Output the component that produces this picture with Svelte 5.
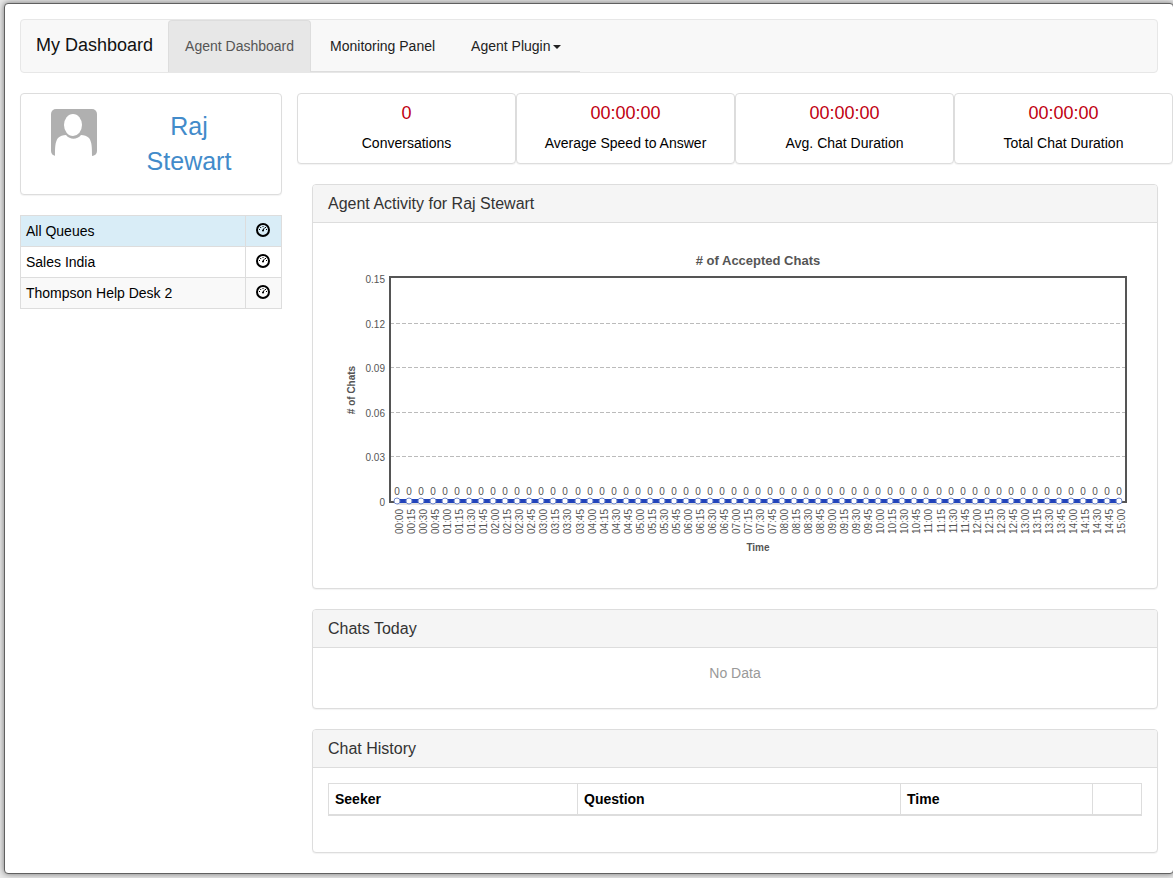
<script>
  const tabs = [
    { label: 'Agent Dashboard', active: true },
    { label: 'Monitoring Panel' },
    { label: 'Agent Plugin', menu: true },
  ];

  const stats = [
    { value: '0', label: 'Conversations' },
    { value: '00:00:00', label: 'Average Speed to Answer' },
    { value: '00:00:00', label: 'Avg. Chat Duration' },
    { value: '00:00:00', label: 'Total Chat Duration' },
  ];

  const queues = ['All Queues', 'Sales India', 'Thompson Help Desk 2'];
  let selected = $state('All Queues');

  // Plot area inside the chart's viewBox
  const plot = { left: 62, right: 798, top: 39, bottom: 264 };
  const firstX = 69;
  const lastX = 791;
  const lineY = 263;

  const gridLines = [
    { label: '0.15', y: 41 },
    { label: '0.12', y: 85.5, line: true },
    { label: '0.09', y: 129.5, line: true },
    { label: '0.06', y: 174.5, line: true },
    { label: '0.03', y: 218.5, line: true },
    { label: '0', y: 264 },
  ];

  // One point every 15 minutes, 00:00 to 15:00
  const points = Array.from({ length: 61 }, (_, i) => {
    const hours = String(Math.floor(i / 4)).padStart(2, '0');
    const minutes = String((i % 4) * 15).padStart(2, '0');
    return {
      time: `${hours}:${minutes}`,
      value: 0,
      x: Math.round(firstX + (i * (lastX - firstX)) / 60),
    };
  });
</script>

{#snippet gauge()}
  <svg class="gauge" viewBox="0 0 14 14" width="14" height="14" aria-hidden="true">
    <circle cx="7" cy="7" r="6" fill="none" stroke="#000" stroke-width="2" />
    <path d="M6.8 8 8.4 4.8" stroke="#000" stroke-width="1" />
    <circle cx="7" cy="7.6" r="1" />
    <path d="M3 6.5h1M10 6.5h1M4.2 4.5h1M6.5 3.5h1M9 4.5h1" stroke="#000" stroke-width="1" />
  </svg>
{/snippet}

<div class="window">
  <nav class="navbar">
    <a class="brand" href="#home">My Dashboard</a>
    <ul class="tabs">
      {#each tabs as tab}
        <li>
          <a href="#tab" class:active={tab.active}>
            {tab.label}{#if tab.menu}<span class="caret"></span>{/if}
          </a>
        </li>
      {/each}
    </ul>
  </nav>

  <div class="row">
    <aside class="sidebar">
      <div class="panel profile">
        <svg class="avatar" viewBox="0 0 46 47" width="46" height="47" aria-hidden="true">
          <path
            fill="#b0b0b0"
            d="M5 0h36a5 5 0 0 1 5 5v37a5 5 0 0 1-5 5H5a5 5 0 0 1-5-5V5a5 5 0 0 1 5-5z"
          />
          <ellipse cx="22" cy="16" rx="9" ry="11" fill="#fff" />
          <path
            fill="#fff"
            d="M4 47C4 39 4 33 7 29c2-2 5-3 8-3 4 5 11 5 15 0 3 0 6 1 8 3 3 4 3 10 3 18z"
          />
        </svg>
        <a class="name" href="#profile">Raj<br />Stewart</a>
      </div>

      <table class="queues">
        <tbody>
          {#each queues as queue}
            <tr class:selected={queue === selected}>
              <td>{queue}</td>
              <td class="icon-cell">
                <button aria-label="Show {queue}" onclick={() => (selected = queue)}>
                  {@render gauge()}
                </button>
              </td>
            </tr>
          {/each}
        </tbody>
      </table>
    </aside>

    <main class="main">
      <div class="stats">
        {#each stats as stat}
          <div class="panel stat">
            <span class="value">{stat.value}</span>
            <span>{stat.label}</span>
          </div>
        {/each}
      </div>

      <section class="panel">
        <h3>Agent Activity for Raj Stewart</h3>
        <div class="body">
          <svg class="chart" viewBox="0 0 814 335" role="img" aria-label="Accepted chats over time">
            <text class="title" x="430" y="27">&#35; of Accepted Chats</text>
            <text class="axis-title" transform="translate(27 152) rotate(-90)">&#35; of Chats</text>
            <text class="axis-title" x="430" y="313">Time</text>

            {#each gridLines as grid}
              <text class="y-label" x="57" y={grid.y + 4}>{grid.label}</text>
              {#if grid.line}
                <line class="grid" x1={plot.left} x2={plot.right} y1={grid.y} y2={grid.y} />
              {/if}
            {/each}

            <rect
              class="frame"
              x={plot.left}
              y={plot.top}
              width={plot.right - plot.left}
              height={plot.bottom - plot.top}
            />
            <line class="shade" x1={firstX} x2={lastX} y1={lineY + 3} y2={lineY + 3} />
            <line class="series" x1={firstX - 2} x2={lastX + 2} y1={lineY} y2={lineY} />

            {#each points as point}
              <circle cx={point.x} cy={lineY} r="3" />
              <text class="point-label" x={point.x} y="257">{point.value}</text>
              <text class="x-label" transform="translate({point.x + 6} 271) rotate(-90)">
                {point.time}
              </text>
            {/each}
          </svg>
        </div>
      </section>

      <section class="panel">
        <h3>Chats Today</h3>
        <div class="body">
          <p class="empty">No Data</p>
        </div>
      </section>

      <section class="panel">
        <h3>Chat History</h3>
        <div class="body">
          <table class="history">
            <thead>
              <tr>
                <th class="seeker">Seeker</th>
                <th class="question">Question</th>
                <th class="time">Time</th>
                <th></th>
              </tr>
            </thead>
          </table>
        </div>
      </section>
    </main>
  </div>
</div>

<style>
  :global(body) {
    background: #e8e8e8;
    overflow-x: hidden;
  }

  .window,
  .window * {
    box-sizing: border-box;
  }

  .window {
    margin: 3px -1px 5px 4px;
    padding: 15px 15px 0;
    background: #fff;
    border: 1px solid #606060;
    border-radius: 4px;
    box-shadow: 0 0 6px rgba(0, 0, 0, 0.5);
    font-family: 'Liberation Sans', Arial, sans-serif;
    font-size: 14px;
    line-height: 20px;
    color: #000;
  }

  a {
    text-decoration: none;
  }

  .navbar {
    display: flex;
    height: 54px;
    margin-bottom: 20px;
    background: #f8f8f8;
    border: 1px solid #e7e7e7;
    border-radius: 4px;
  }

  .brand {
    padding: 15px;
    font-size: 18px;
    color: #111;
  }

  .tabs {
    display: flex;
    margin: 0;
    padding: 0;
    list-style: none;
    border-bottom: 1px solid #ddd;
  }

  .tabs li {
    margin-right: 2px;
  }

  .tabs a {
    display: block;
    height: 52px;
    padding: 15px 16px;
    border: 1px solid transparent;
    border-bottom: 0;
    border-radius: 4px 4px 0 0;
    color: #222;
  }

  .tabs a.active {
    background: #e7e7e7;
    border-color: #ddd;
    color: #555;
  }

  .caret {
    display: inline-block;
    margin-left: 2px;
    border-top: 4px solid #222;
    border-left: 4px solid transparent;
    border-right: 4px solid transparent;
    vertical-align: middle;
  }

  .row {
    display: flex;
    margin: 0 -15px;
  }

  .sidebar {
    width: 25%;
    padding: 0 15px;
  }

  .main {
    width: 75%;
    padding: 0 15px;
  }

  .panel {
    margin-bottom: 20px;
    background: #fff;
    border: 1px solid #ddd;
    border-radius: 4px;
    box-shadow: 0 1px 1px rgba(0, 0, 0, 0.05);
  }

  .profile {
    display: flex;
    padding: 15px 15px 15px 30px;
  }

  .avatar {
    flex: none;
  }

  .name {
    flex: 1;
    margin-left: 15px;
    font-size: 25px;
    line-height: 35px;
    text-align: center;
    color: #428bca;
  }

  table {
    width: 100%;
    border-collapse: collapse;
  }

  td,
  th {
    padding: 5px;
    border: 1px solid #ddd;
    text-align: left;
  }

  .queues tr:nth-child(odd) {
    background: #f9f9f9;
  }

  .queues tr.selected {
    background: #d9edf7;
  }

  .icon-cell {
    width: 36px;
    padding: 5px 10px 7px;
  }

  .icon-cell button {
    display: block;
    padding: 0;
    background: none;
    border: 0;
    cursor: pointer;
  }

  .gauge {
    display: block;
  }

  .stats {
    display: flex;
    margin: 0 -15px;
  }

  .stat {
    display: flex;
    flex: 1;
    flex-direction: column;
    gap: 10px;
    padding: 9px 0 10px;
    text-align: center;
  }

  .value {
    font-size: 18px;
    color: #c00010;
  }

  h3 {
    margin: 0;
    padding: 9px 15px 8px;
    background: #f5f5f5;
    border-bottom: 1px solid #ddd;
    border-radius: 3px 3px 0 0;
    font-size: 16px;
    font-weight: normal;
    color: #333;
  }

  .body {
    padding: 15px;
  }

  .chart {
    display: block;
    width: 100%;
    fill: #555;
    font-size: 10px;
  }

  .title {
    font-size: 13px;
    font-weight: bold;
    text-anchor: middle;
  }

  .axis-title {
    font-weight: bold;
    text-anchor: middle;
  }

  .y-label,
  .x-label {
    text-anchor: end;
  }

  .point-label {
    text-anchor: middle;
  }

  .grid {
    stroke: #bbb;
    stroke-dasharray: 4 2;
  }

  .frame {
    fill: none;
    stroke: #555;
    stroke-width: 2;
  }

  .shade {
    stroke: #e0e0e0;
    stroke-width: 2;
  }

  .series {
    stroke: #2244bb;
    stroke-width: 4;
  }

  .chart circle {
    fill: #fff;
    stroke: #7088cc;
  }

  .empty {
    margin: 0 0 10px;
    text-align: center;
    color: #999;
  }

  .history {
    margin-bottom: 21px;
  }

  .history th {
    padding: 5px 6px;
    border-bottom-width: 2px;
  }

  .seeker {
    width: 249px;
  }

  .question {
    width: 323px;
  }

  .time {
    width: 192px;
  }
</style>
